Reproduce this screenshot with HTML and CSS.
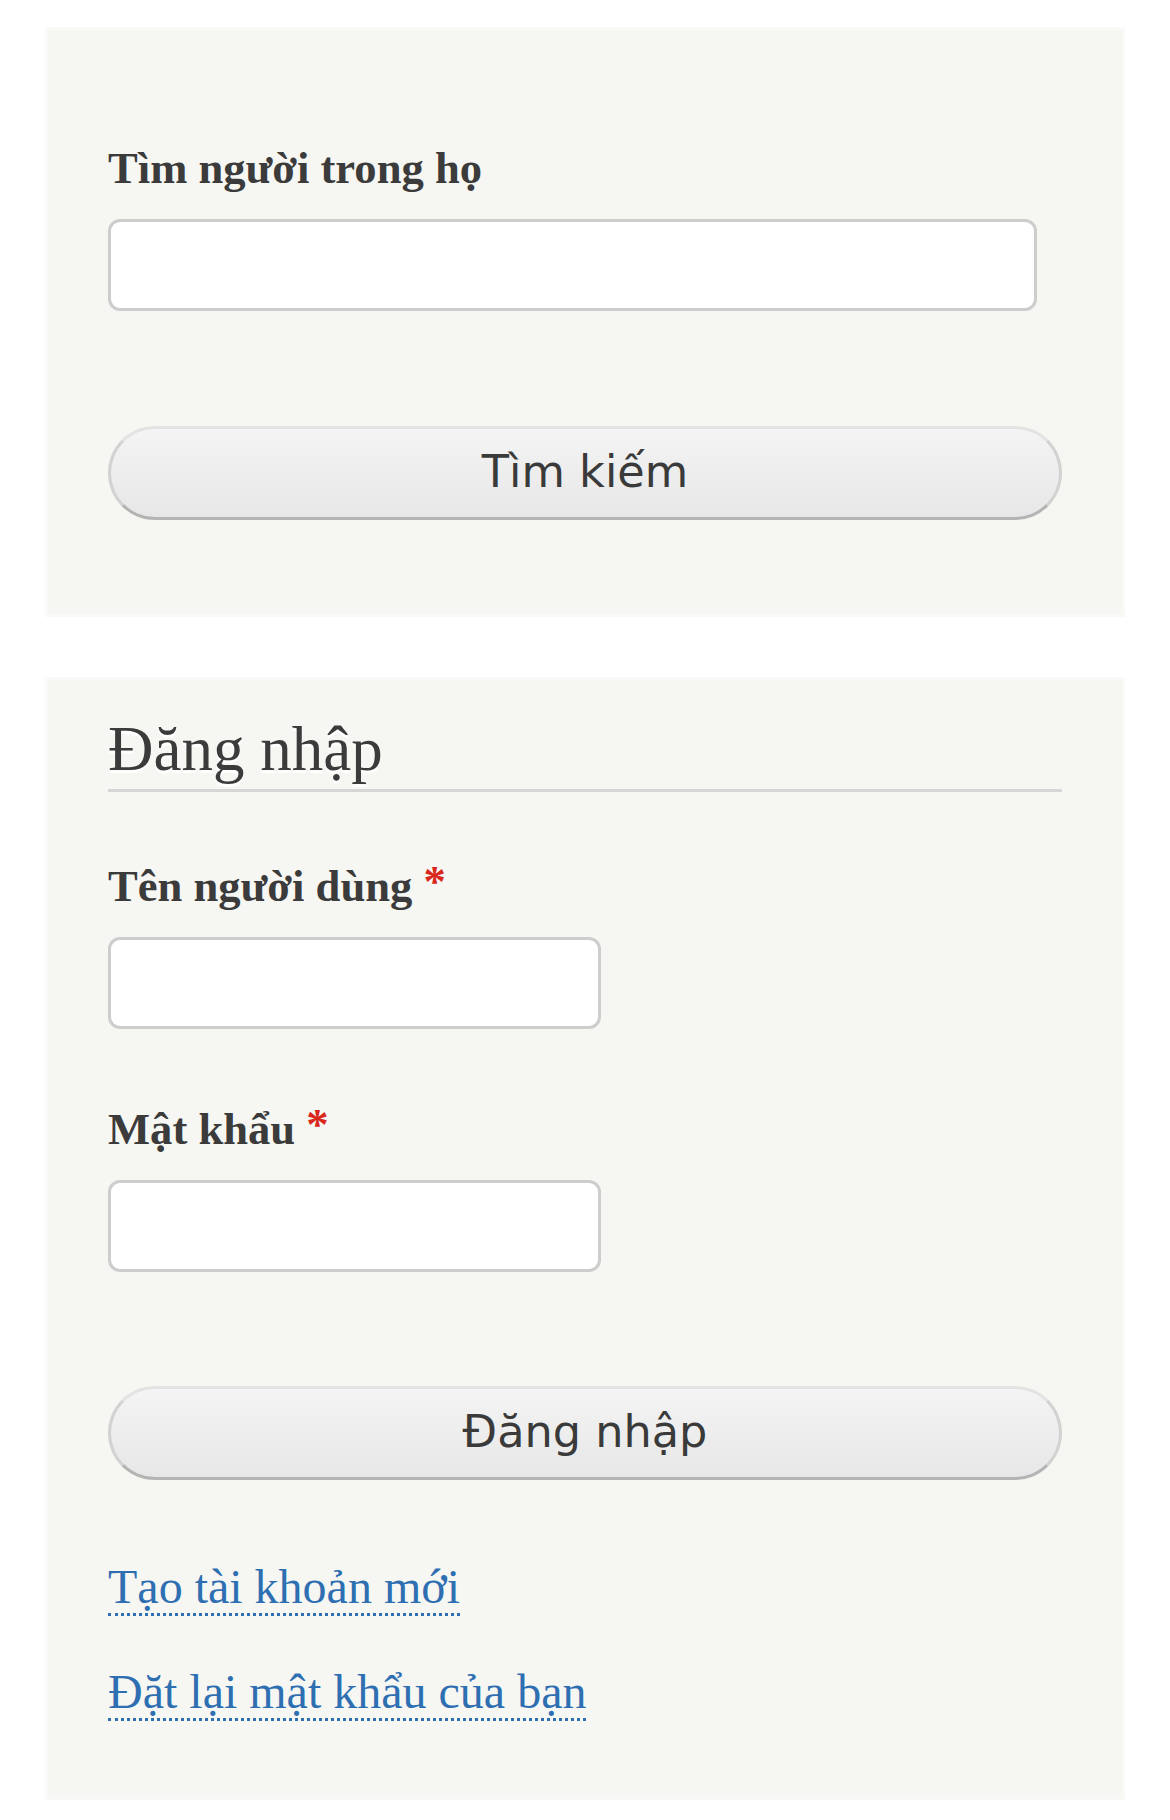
FILE: index.html
```html
<!DOCTYPE html>
<html lang="vi">
<head>
<meta charset="utf-8">
<title>Đăng nhập</title>
<link rel="stylesheet" href="styles.css">
</head>
<body>
<section class="block block-search">
  <form class="form">
    <label class="label label-first" for="q">Tìm người trong họ</label>
    <input class="input input-wide" id="q" type="text">
    <button class="btn btn-search" type="button">Tìm kiếm</button>
  </form>
</section>
<section class="block block-login">
  <h2 class="block-title">Đăng nhập</h2>
  <form class="form">
    <label class="label label-user" for="u">Tên người dùng <span class="req">*</span></label>
    <input class="input input-narrow" id="u" type="text">
    <label class="label label-pass" for="p">Mật khẩu <span class="req">*</span></label>
    <input class="input input-narrow" id="p" type="password">
    <button class="btn btn-login" type="button">Đăng nhập</button>
  </form>
  <ul class="links">
    <li class="link-item link-first"><a href="#">Tạo tài khoản mới</a></li>
    <li class="link-item link-second"><a href="#">Đặt lại mật khẩu của bạn</a></li>
  </ul>
</section>
</body>
</html>
```

FILE: styles.css
```css
html, body {
  margin: 0;
  padding: 0;
  background: #ffffff;
}
body {
  font-family: "Liberation Serif", "Times New Roman", serif;
  color: #3b3b3b;
}
.block {
  box-sizing: border-box;
  width: 1080px;
  margin-left: 45px;
  background: #f6f6f2;
  border: 3px solid #f9f9f7;
  padding: 0 60px;
}
.block-search {
  margin-top: 27px;
  padding-bottom: 94px;
}
.block-login {
  margin-top: 60px;
  padding-bottom: 76px;
}
.form {
  display: flex;
  flex-direction: column;
  align-items: flex-start;
  margin: 0;
}
.label {
  display: block;
  font-weight: bold;
  font-size: 44.6px;
  line-height: 54px;
  height: 54px;
  color: #3b3b3b;
}
.label-first { margin-top: 111px; }
.label-user { margin-top: 67px; }
.label-pass { margin-top: 73px; }
.req {
  color: #d9271c;
  line-height: 0;
  vertical-align: 5px;
}
.input {
  box-sizing: border-box;
  display: block;
  margin: 24px 0 0 0;
  height: 92px;
  border: 3px solid #cdcdcd;
  border-radius: 12px;
  background: #ffffff;
  padding: 6px 9px;
  font-size: 40px;
  outline: none;
}
.input-wide { width: 929px; }
.input-narrow { width: 493px; }
.btn {
  box-sizing: border-box;
  display: block;
  width: 100%;
  height: 94px;
  border: 3px solid #e3e3e3;
  border-left-color: #d2d2d2;
  border-right-color: #d2d2d2;
  border-bottom-color: #b4b4b4;
  border-radius: 60px;
  background: linear-gradient(to bottom, #f4f4f4, #e7e7e7);
  color: #3a3a3a;
  font-family: "DejaVu Sans", Verdana, sans-serif;
  font-size: 44.6px;
  line-height: 1;
  padding: 0 20px 2px 20px;
  text-align: center;
  cursor: pointer;
}
.btn-search { margin-top: 115px; }
.btn-login { margin-top: 114px; }
.block-title {
  margin: 30px 0 0 0;
  font-weight: normal;
  font-size: 63px;
  line-height: 79px;
  color: #3b3b3b;
  text-shadow: 0 3px 0 #ffffff;
  border-bottom: 3px solid #d6d6d6;
}
.links {
  list-style: none;
  margin: 0;
  padding: 0;
}
.link-item {
  font-size: 48px;
  line-height: 58px;
}
.link-first { margin-top: 78px; }
.link-second { margin-top: 47px; }
.link-item a {
  color: #2e6fb2;
  text-decoration: none;
  border-bottom: 3px dotted #2e6fb2;
}
```
